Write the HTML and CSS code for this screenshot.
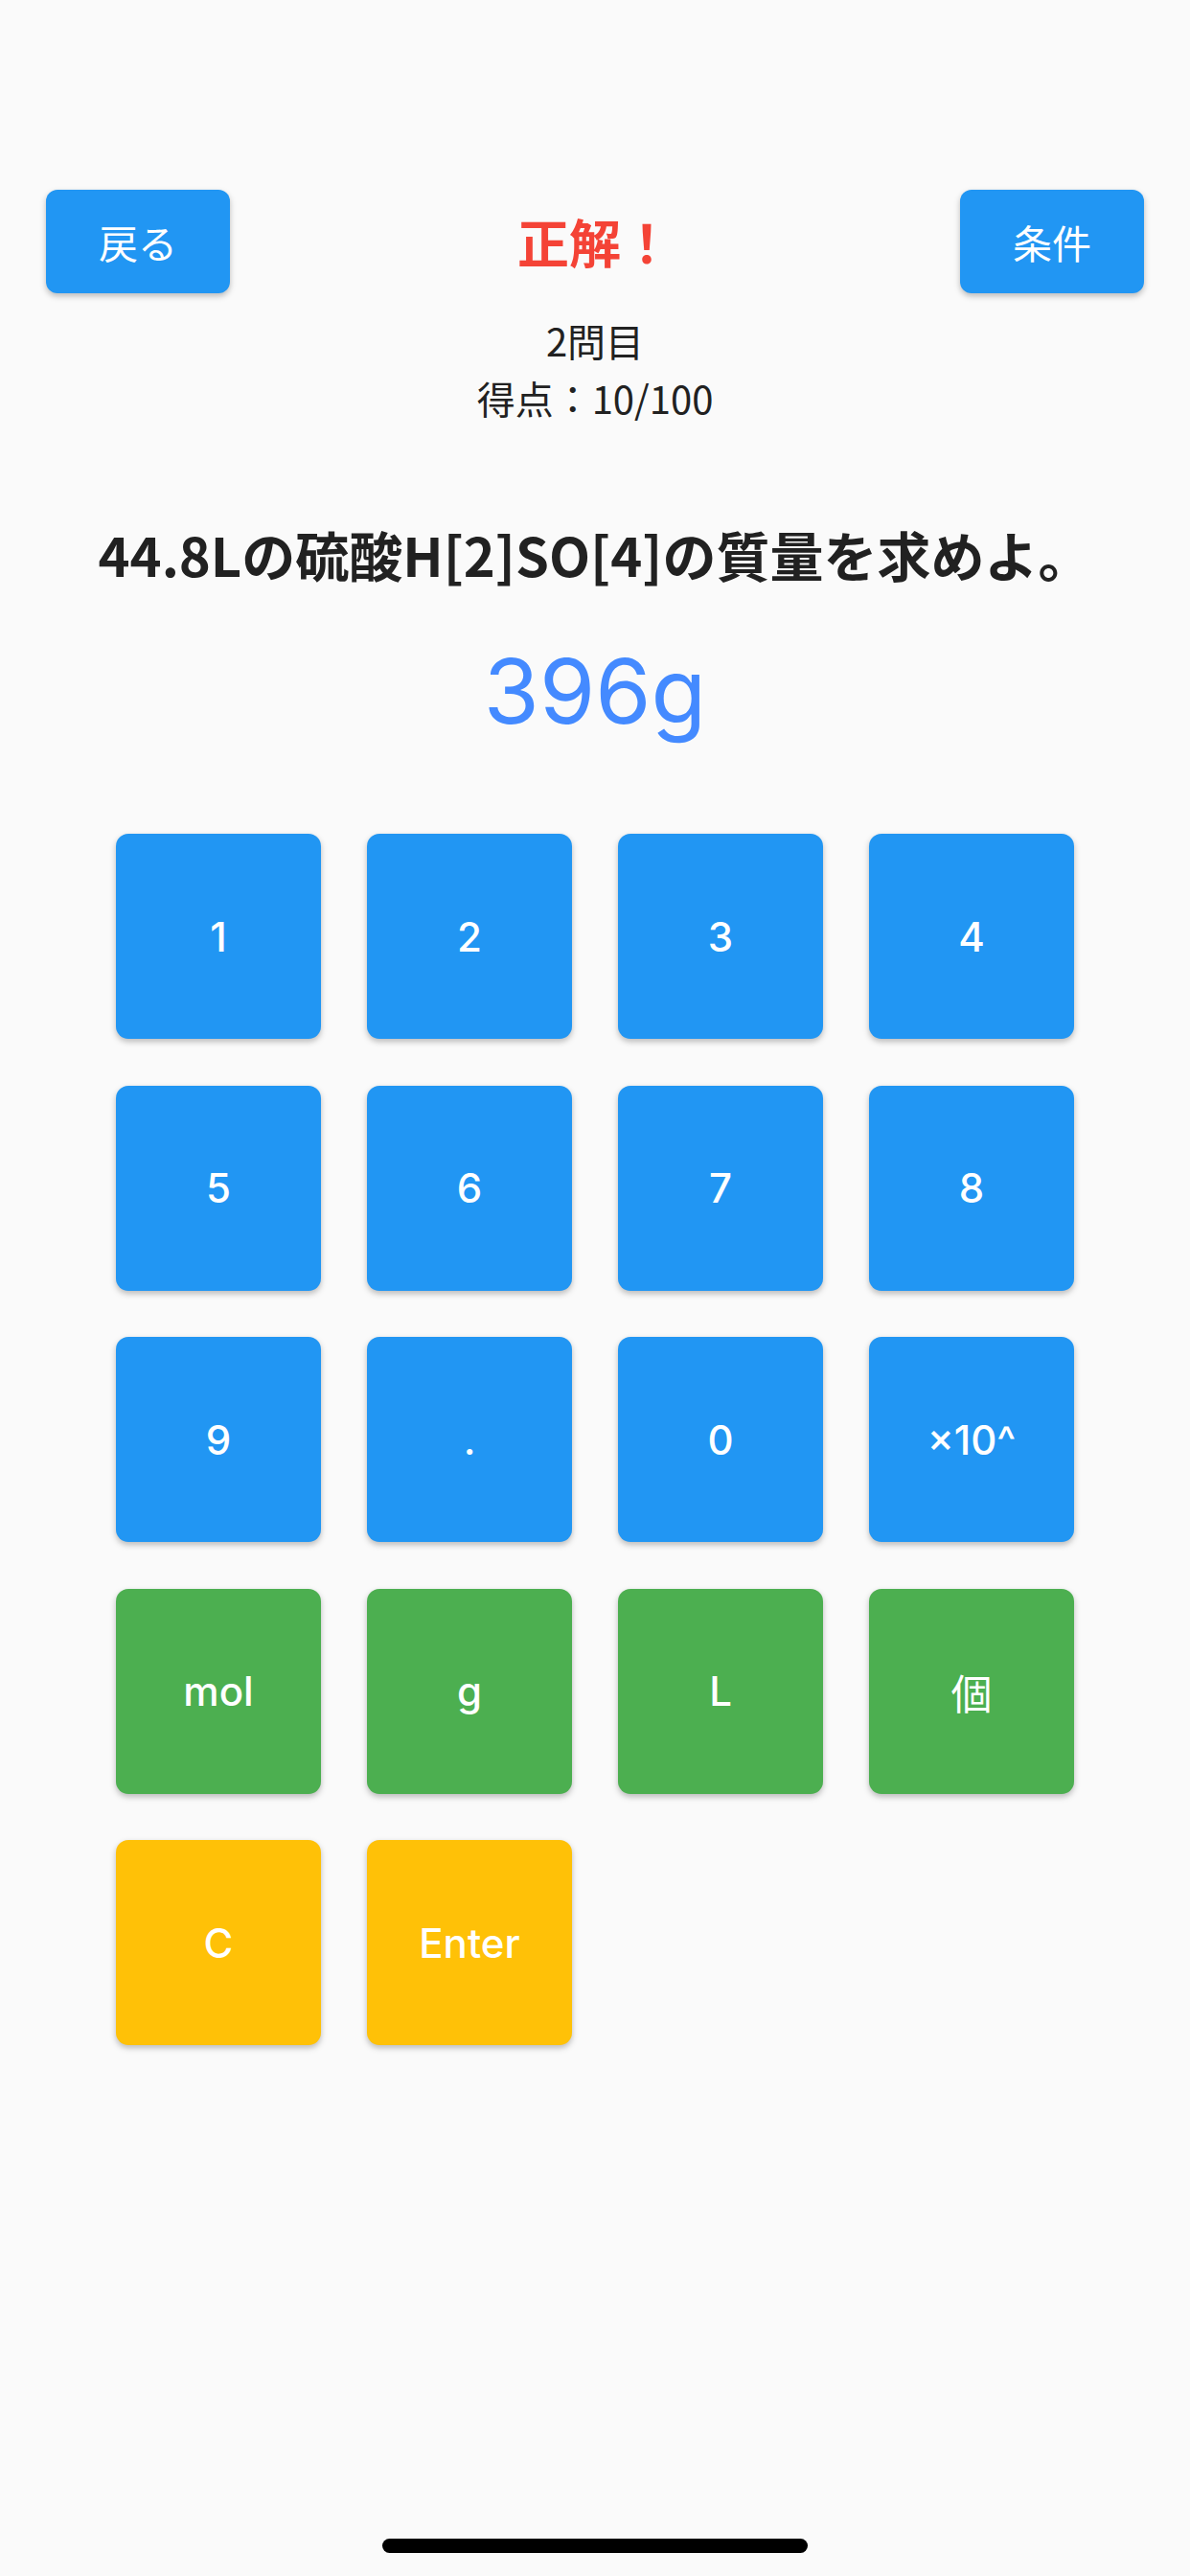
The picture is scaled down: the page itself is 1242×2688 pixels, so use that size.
FILE: index.html
```html
<!DOCTYPE html>
<html lang="ja">
<head>
<meta charset="utf-8">
<title>Quiz</title>
<link rel="stylesheet" href="styles.css">
</head>
<body>
<div class="screen">
  <header class="topbar">
    <button class="top-btn">戻る</button>
    <div class="result">正解！</div>
    <button class="top-btn">条件</button>
  </header>
  <div class="info">
    <div class="info-line">2問目</div>
    <div class="info-line">得点：10/100</div>
  </div>
  <h1 class="question">44.8Lの硫酸H[2]SO[4]の質量を求めよ。</h1>
  <div class="answer">396g</div>
  <div class="keypad">
    <button class="key key-blue">1</button>
    <button class="key key-blue">2</button>
    <button class="key key-blue">3</button>
    <button class="key key-blue">4</button>
    <button class="key key-blue">5</button>
    <button class="key key-blue">6</button>
    <button class="key key-blue">7</button>
    <button class="key key-blue">8</button>
    <button class="key key-blue">9</button>
    <button class="key key-blue">.</button>
    <button class="key key-blue">0</button>
    <button class="key key-blue">×10^</button>
    <button class="key key-green">mol</button>
    <button class="key key-green">g</button>
    <button class="key key-green">L</button>
    <button class="key key-green key-cjk">個</button>
    <button class="key key-amber">C</button>
    <button class="key key-amber">Enter</button>
  </div>
  <div class="home-indicator"></div>
</div>
</body>
</html>
```

FILE: styles.css
```css
* {
  box-sizing: border-box;
}

html, body {
  margin: 0;
  padding: 0;
  background: #fafafa;
}

.screen {
  position: relative;
  width: 1242px;
  height: 2688px;
  background: #fafafa;
  font-family: "Noto Sans CJK JP", "Noto Sans", sans-serif;
  color: #212121;
  display: flex;
  flex-direction: column;
  align-items: center;
}

.topbar {
  width: 100%;
  margin-top: 198px;
  padding: 0 48px;
  height: 108px;
  display: flex;
  align-items: center;
  justify-content: space-between;
}

.top-btn {
  width: 192px;
  height: 108px;
  border: none;
  border-radius: 12px;
  background: #2196f3;
  color: #ffffff;
  font-family: "Noto Sans CJK JP", sans-serif;
  font-size: 41px;
  font-weight: 400;
  padding: 0;
  box-shadow: 0 3px 6px rgba(0, 0, 0, 0.26);
}

.result {
  font-size: 54px;
  font-weight: 700;
  color: #f44336;
  line-height: 1;
}

.info {
  margin-top: 19px;
  display: flex;
  flex-direction: column;
  align-items: center;
}

.info-line {
  font-size: 40px;
  line-height: 60px;
  color: #212121;
}

.question {
  margin: 94px 0 0;
  font-size: 56px;
  line-height: 78px;
  font-weight: 700;
  color: #212121;
}

.answer {
  margin-top: 48px;
  font-family: Inter, Roboto, sans-serif;
  font-size: 94px;
  line-height: 113px;
  color: #448aff;
}

.keypad {
  margin-top: 92px;
  width: 1000px;
  display: grid;
  grid-template-columns: repeat(4, 214px);
  grid-auto-rows: 214px;
  column-gap: 48px;
  row-gap: 48.5px;
}

.key {
  border: none;
  border-radius: 13px;
  padding: 0;
  color: #ffffff;
  font-family: Inter, Roboto, sans-serif;
  font-size: 42px;
  font-weight: 500;
  box-shadow: 0 3px 6px rgba(0, 0, 0, 0.26);
}

.key-cjk {
  font-family: "Noto Sans CJK JP", sans-serif;
  font-weight: 400;
  font-size: 43px;
}

.key-blue {
  background: #2196f3;
}

.key-green {
  background: #4caf50;
}

.key-amber {
  background: #ffc107;
}

.home-indicator {
  position: absolute;
  left: 399px;
  top: 2649px;
  width: 444px;
  height: 15px;
  border-radius: 8px;
  background: #000000;
}
```
